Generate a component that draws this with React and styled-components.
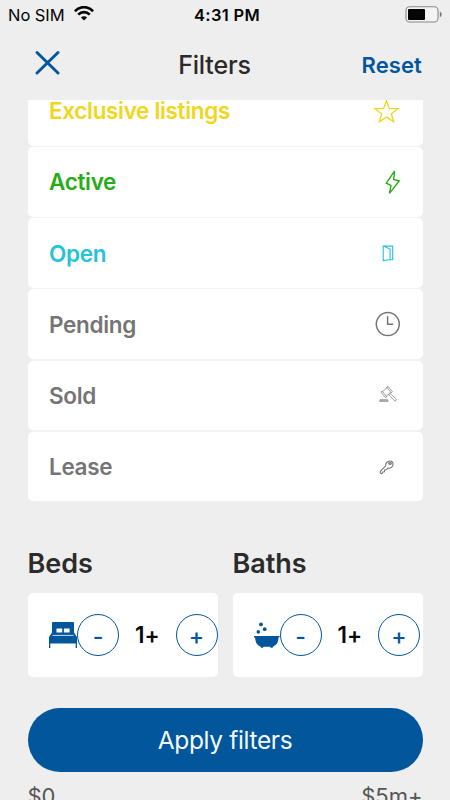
import React from "react";
import styled, { createGlobalStyle } from "styled-components";

const BLUE = "#02569c";

const Global = createGlobalStyle`
  *, *::before, *::after { box-sizing: border-box; }
  body { margin: 0; background: #eeeeee; font-family: Inter, "Liberation Sans", sans-serif; }
  button { font-family: inherit; padding: 0; border: 0; background: none; }
`;

const Screen = styled.div`
  position: relative;
  width: 450px;
  height: 800px;
  overflow: hidden;
  background: #eeeeee;
  display: flex;
  flex-direction: column;
`;

const StatusBar = styled.div`
  height: 29px;
  padding: 0 8px;
  display: grid;
  grid-template-columns: 1fr auto 1fr;
  align-items: center;
  color: #050505;
  font-size: 16.5px;
  line-height: 28px;
`;

const Carrier = styled.div`
  display: flex;
  align-items: center;
  gap: 9px;
  letter-spacing: -0.05px;
  svg { flex: none; margin-top: -2px; }
`;

const Clock = styled.div`
  font-weight: 600;
  letter-spacing: 0.3px;
  padding-left: 4px;
`;

const Battery = styled.div`
  display: flex;
  justify-content: flex-end;
`;

const Header = styled.header`
  height: 71px;
  padding: 1px 28px 0 35px;
  display: grid;
  grid-template-columns: 1fr auto 1fr;
  align-items: center;
`;

const CloseButton = styled.button`
  display: flex;
  justify-self: start;
  margin-top: -5px;
`;

const Title = styled.h1`
  margin: 0 8px 0 -20px;
  font-size: 25px;
  line-height: 30px;
  font-weight: 500;
  letter-spacing: -0.15px;
  color: #2a2a2a;
`;

const ResetButton = styled.button`
  justify-self: end;
  font-size: 22px;
  line-height: 30px;
  font-weight: 600;
  letter-spacing: 0.1px;
  color: ${BLUE};
`;

const ScrollArea = styled.main`
  flex: 1;
  min-height: 0;
  overflow: hidden;
  padding: 0 27.5px;
`;

const StatusList = styled.div`
  margin-top: -24px;
  display: flex;
  flex-direction: column;
  gap: 1.5px;
  background: linear-gradient(90deg, transparent 5px, #f3f3f3 5px, #f3f3f3 390px, transparent 390px);
`;

const StatusRow = styled.div`
  height: 69.65px;
  padding: 0 23px 0 21.5px;
  border-radius: 5px;
  background: #ffffff;
  display: flex;
  align-items: center;
  justify-content: space-between;
  font-size: 22.5px;
  font-weight: 600;
  letter-spacing: -0.33px;
  color: ${(p) => p.$color};
`;

const IconSlot = styled.span`
  display: flex;
  width: 26px;
  height: 26px;
  svg { overflow: visible; }
`;

const Counters = styled.div`
  margin-top: 45px;
  display: grid;
  grid-template-columns: 190px 190px;
  justify-content: space-between;
`;

const CounterTitle = styled.h2`
  margin: 0;
  font-size: 27px;
  line-height: 36px;
  font-weight: 600;
  letter-spacing: -0.05px;
  color: #2b2b2b;
`;

const CounterCard = styled.div`
  margin-top: 10.5px;
  height: 84.5px;
  padding-left: 21.5px;
  border-radius: 5px;
  background: #ffffff;
  display: flex;
  align-items: center;
  svg { flex: none; }
`;

const RoundButton = styled.button`
  flex: none;
  width: 42px;
  height: 42px;
  border: 1.5px solid ${BLUE};
  border-radius: 50%;
  color: ${BLUE};
  font-size: 23px;
  line-height: 40px;
  font-weight: 500;
  padding-top: 2px;
`;

const CountValue = styled.div`
  flex: none;
  width: 56.5px;
  text-align: center;
  font-size: 22.5px;
  line-height: 28px;
  padding-bottom: 1px;
  font-weight: 600;
  letter-spacing: -0.2px;
  color: #0a0a0a;
`;

const PriceRange = styled.div`
  margin-top: 105px;
  display: flex;
  justify-content: space-between;
  font-size: 22px;
  line-height: 28px;
  color: #555555;
`;

const ApplyButton = styled.button`
  position: absolute;
  left: 27.5px;
  top: 708px;
  width: 395px;
  height: 64px;
  border-radius: 32px;
  background: ${BLUE};
  color: #f4faff;
  font-size: 24.5px;
  line-height: 65px;
  font-weight: 400;
  letter-spacing: -0.35px;
`;

const WifiIcon = () => (
  <svg width="20" height="15" viewBox="0 0 20 15" fill="none" stroke="#050505">
    <path d="M.9 5.2C6-.2 14-.2 19.100 5.200" strokeWidth="2.700" />
    <path d="M4.200 8.700c3.300-3.400 8.300-3.400 11.600 0" strokeWidth="2.600" />
    <path d="M10 14.600 6.900 11.500c1.800-1.700 4.400-1.700 6.200 0z" fill="#050505" stroke="none" />
  </svg>
);

const BatteryIcon = () => (
  <svg width="38" height="17" viewBox="0 0 38 17">
    <rect x="2" y=".8" width="32" height="15.200" rx="3.600" fill="#f3f3f3" stroke="#888" strokeWidth="1.100" />
    <rect x="4" y="2.900" width="17" height="11" rx="1" fill="#050505" />
    <path d="M35.800 5.600c2.400 1 2.400 4.600 0 5.600z" fill="#777" />
  </svg>
);

const CloseIcon = () => (
  <svg width="25" height="25" viewBox="0 0 25 25" fill="none" stroke={BLUE} strokeWidth="2.900" strokeLinecap="round">
    <path d="m2 2.500 21 20.500M23 2.500 2 23" />
  </svg>
);

const Glyph = ({ children, width = 1.3 }) => (
  <svg width="26" height="26" viewBox="0 0 26 26" fill="none" stroke="currentColor" strokeWidth={width} strokeLinejoin="miter">
    {children}
  </svg>
);

const StarIcon = () => (
  <Glyph>
    <path d="M12.500 2.700 15.400 10.400 24 10.700 17.300 15.700 19.700 23.800 12.500 19.100 5.400 23.800 7.700 15.700.9 10.700 9.600 10.400z" />
  </Glyph>
);

const BoltIcon = () => (
  <Glyph width={1.4}>
    <path d="M20.500 2.200 12.300 14.200 17 16.300 15.400 24.400 25.300 12 19.700 10.500z" />
  </Glyph>
);

const DoorIcon = () => (
  <Glyph width={1.1}>
    <path d="M9.200 20V6.100h9.500v13.700h-2.500M9.200 6.100l6.900 3v10.500l-6.900 1z" />
  </Glyph>
);

const ClockIcon = () => (
  <Glyph width={1.5}>
    <circle cx="13.800" cy="13.100" r="11.500" />
    <path d="M13.600 5.200v8.100h5.600" />
  </Glyph>
);

const GavelIcon = () => (
  <Glyph width={0.7}>
    <path d="m8.500 9.600 5-4.300M11.800 14.500l5-4.300M12.700 5.200l1.200-1 4.500 5.600-1.200 1zM7 10.100l1.200-1 4.500 5.600-1.200 1zM14.600 12.700l1.500-1.300 5.800 5.300c1.300 1.500-.4 3-1.700 1.700z" />
    <path d="M6 18.900v-1.200h7.700v1.200z" />
    <path d="M5.300 19.200h9.200" />
  </Glyph>
);

const KeyIcon = () => (
  <Glyph width={1.1}>
    <path d="M11.700 11.800c-.2-5.200 7.300-6.800 7.300-1.800 0 3.100-2.300 4.600-5.100 4.100l-1.300 1.500-1.800.2-.3 1.900-1.900.3-.4 1.300c-1.300 1-2.600-.7-1.700-2.100z" />
    <ellipse cx="16" cy="9.500" rx="1.400" ry=".9" />
  </Glyph>
);

const BedIcon = () => (
  <svg width="28" height="26" viewBox="0 0 28 26" fill={BLUE}>
    <path fillRule="evenodd" d="M4 0h20q1 0 1 1v9.500L28 15v11h-1.300v-4.500H1.300V26H0V15l3-4.500V1q0-1 1-1zm3.500 6.500v4h5.700v-4zm7.400 0v4h5.700v-4z" />
    <path d="M3.500 13.400h21" stroke="#fff" strokeWidth=".8" />
  </svg>
);

const BathIcon = () => (
  <svg width="25.500" height="26" viewBox="0 0 25.500 26" fill={BLUE}>
    <circle cx="7" cy="2.400" r="1.900" />
    <circle cx="10.700" cy="7.200" r="1.900" />
    <circle cx="4.300" cy="9.900" r="1.800" />
    <path d="M0 14h25.500v1.500h-1c-.2 4.500-1.700 7.700-5.100 8.800l-.8 1.400h-2l-.6-1H9.600l-.7 1H7l-.8-1.400C2.900 23.200 1.400 20 1.100 15.500H0z" />
  </svg>
);

const STATUSES = [
  { label: "Exclusive listings", color: "#f2d61c", Icon: StarIcon },
  { label: "Active", color: "#26ad16", Icon: BoltIcon },
  { label: "Open", color: "#25c2d9", Icon: DoorIcon },
  { label: "Pending", color: "#757575", Icon: ClockIcon },
  { label: "Sold", color: "#757575", Icon: GavelIcon },
  { label: "Lease", color: "#757575", Icon: KeyIcon },
];

const Counter = ({ title, Icon }) => (
  <section>
    <CounterTitle>{title}</CounterTitle>
    <CounterCard>
      <Icon />
      <RoundButton>-</RoundButton>
      <CountValue>1+</CountValue>
      <RoundButton>+</RoundButton>
    </CounterCard>
  </section>
);

export default function App() {
  return (
    <>
      <Global />
      <Screen>
        <StatusBar>
          <Carrier>No SIM<WifiIcon /></Carrier>
          <Clock>4:31 PM</Clock>
          <Battery><BatteryIcon /></Battery>
        </StatusBar>
        <Header>
          <CloseButton aria-label="Close"><CloseIcon /></CloseButton>
          <Title>Filters</Title>
          <ResetButton>Reset</ResetButton>
        </Header>
        <ScrollArea>
          <StatusList>
            {STATUSES.map(({ label, color, Icon }) => (
              <StatusRow key={label} $color={color}>
                {label}
                <IconSlot><Icon /></IconSlot>
              </StatusRow>
            ))}
          </StatusList>
          <Counters>
            <Counter title="Beds" Icon={BedIcon} />
            <Counter title="Baths" Icon={BathIcon} />
          </Counters>
          <PriceRange>
            <span>$0</span>
            <span>$5m+</span>
          </PriceRange>
        </ScrollArea>
        <ApplyButton>Apply filters</ApplyButton>
      </Screen>
    </>
  );
}
